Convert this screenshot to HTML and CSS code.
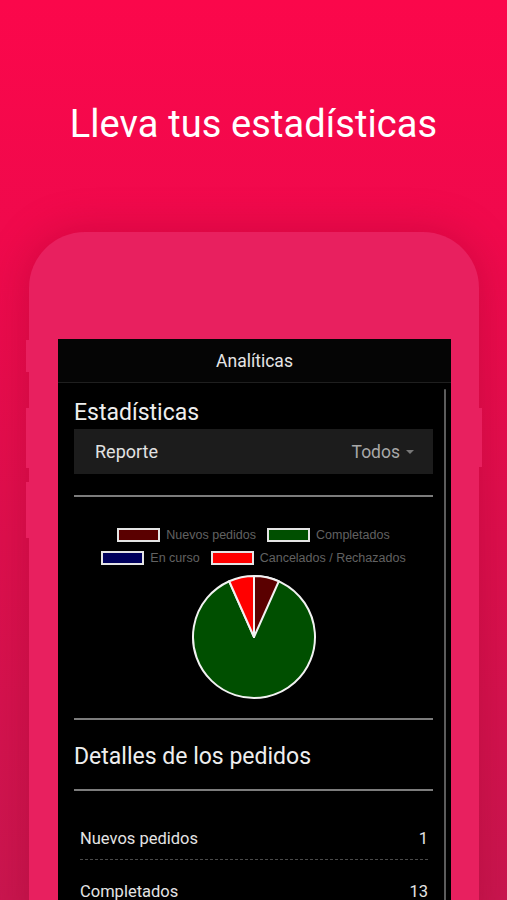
FILE: index.html
```html
<!DOCTYPE html>
<html lang="es">
<head>
<meta charset="utf-8">
<title>Lleva tus estadísticas</title>
<link rel="stylesheet" href="styles.css">
</head>
<body>
<div class="page">
  <h1 class="headline">Lleva tus estadísticas</h1>
  <div class="phone">
    <span class="btn btn-l1"></span>
    <span class="btn btn-l2"></span>
    <span class="btn btn-l3"></span>
    <span class="btn btn-r1"></span>
    <div class="screen">
      <div class="appbar">Analíticas</div>
      <div class="content">
        <span class="scrollbar"></span>
        <h2 class="section-title">Estadísticas</h2>
        <div class="select">
          <span class="select-label">Reporte</span>
          <span class="select-value">Todos <span class="caret"></span></span>
        </div>
        <hr class="rule rule-first">
        <div class="legend">
          <div class="legend-row">
            <span class="legend-item"><span class="swatch sw-new"></span>Nuevos pedidos</span>
            <span class="legend-item"><span class="swatch sw-done"></span>Completados</span>
          </div>
          <div class="legend-row">
            <span class="legend-item"><span class="swatch sw-prog"></span>En curso</span>
            <span class="legend-item"><span class="swatch sw-canc"></span>Cancelados / Rechazados</span>
          </div>
        </div>
        <div class="chart">
          <svg width="128" height="128" viewBox="-64 -64 128 128">
            <path d="M0 0 L0 -61 A61 61 0 1 1 -24.81 -55.73 Z" fill="#004f00" stroke="#f2f2f2" stroke-width="2" stroke-linejoin="round"/>
            <path d="M0 0 L0 -61 A61 61 0 0 1 24.81 -55.73 Z" fill="#5a0000" stroke="#f2f2f2" stroke-width="2" stroke-linejoin="round"/>
            <path d="M0 0 L-24.81 -55.73 A61 61 0 0 1 0 -61 Z" fill="#ff0000" stroke="#f2f2f2" stroke-width="2" stroke-linejoin="round"/>
          </svg>
        </div>
        <hr class="rule rule-chart">
        <h2 class="section-title details-title">Detalles de los pedidos</h2>
        <hr class="rule rule-details">
        <ul class="stats">
          <li class="stat"><span>Nuevos pedidos</span><span>1</span></li>
          <li class="stat"><span>Completados</span><span>13</span></li>
        </ul>
      </div>
    </div>
  </div>
</div>
</body>
</html>
```

FILE: styles.css
```css
html, body {
  margin: 0;
  padding: 0;
}

body {
  width: 507px;
  height: 900px;
  overflow: hidden;
  font-family: Roboto, "Liberation Sans", sans-serif;
  background: linear-gradient(180deg, #fb074b 0%, #f0094c 25%, #dd0f4d 60%, #c9164f 100%);
}

.page {
  display: flex;
  flex-direction: column;
  height: 900px;
}

.headline {
  margin: 0;
  padding-top: 102px;
  height: 232px;
  flex: none;
  box-sizing: border-box;
  text-align: center;
  color: #ffffff;
  font-weight: 400;
  font-size: 38px;
  line-height: 44px;
  letter-spacing: 0.1px;
}

.phone {
  position: relative;
  margin-left: 29px;
  width: 450px;
  flex: 1;
  box-sizing: border-box;
  padding: 107px 28px 0 29px;
  background: #e8205f;
  border-radius: 56px 56px 0 0;
  box-shadow: 0 0 40px rgba(150, 0, 40, 0.35);
  display: flex;
}

.btn {
  position: absolute;
  width: 3px;
  background: #e8205f;
}
.btn-l1 { left: -3px; top: 108px; height: 32px; }
.btn-l2 { left: -3px; top: 176px; height: 60px; }
.btn-l3 { left: -3px; top: 250px; height: 56px; }
.btn-r1 { right: -3px; top: 176px; height: 59px; }

.screen {
  flex: 1;
  background: #000;
  display: flex;
  flex-direction: column;
}

.appbar {
  height: 44px;
  flex: none;
  box-sizing: border-box;
  border-bottom: 1px solid #1f1f1f;
  background: #050505;
  color: #e6e6e6;
  font-size: 17.5px;
  display: flex;
  align-items: center;
  justify-content: center;
}

.content {
  position: relative;
  padding: 0 18px 0 16px;
  flex: 1;
}

.scrollbar {
  position: absolute;
  right: 5px;
  top: 6px;
  bottom: 0;
  width: 2px;
  background: #5c5c5c;
  border-radius: 1px;
}

.section-title {
  margin: 17px 0 0;
  font-size: 23px;
  font-weight: 400;
  line-height: 26px;
  color: #eeeeee;
}

.select {
  margin-top: 3px;
  height: 45px;
  background: #1c1c1c;
  display: flex;
  align-items: center;
  justify-content: space-between;
  padding: 0 19px 0 21px;
}

.select-label {
  color: #e2e2e2;
  font-size: 18px;
}

.select-value {
  color: #a8a8a8;
  font-size: 17.5px;
  display: flex;
  align-items: center;
  gap: 6px;
}

.caret {
  width: 0;
  height: 0;
  border-left: 4px solid transparent;
  border-right: 4px solid transparent;
  border-top: 4px solid #777;
  margin-top: 1px;
}

.rule {
  margin: 0;
  border: 0;
  height: 2px;
  background: #7c7c7c;
}

.rule-first {
  margin-top: 21px;
}

.legend {
  margin-top: 31px;
  display: flex;
  flex-direction: column;
  gap: 9px;
  font-family: "Liberation Sans", Arial, sans-serif;
  font-size: 12.5px;
  color: #626262;
}

.legend-row {
  display: flex;
  justify-content: center;
  gap: 11px;
  height: 14px;
  align-items: center;
}

.legend-item {
  display: flex;
  align-items: center;
  gap: 6px;
  white-space: nowrap;
}

.swatch {
  width: 39px;
  height: 10px;
  border: 2px solid #e4e4e4;
}
.sw-new { background: #5a0000; }
.sw-done { background: #004f00; }
.sw-prog { background: #00005c; }
.sw-canc { background: #ff0000; }

.chart {
  margin-top: 8px;
  display: flex;
  justify-content: center;
}

.chart svg {
  display: block;
}

.rule-chart {
  margin-top: 17px;
}

.details-title {
  margin-top: 24px;
}

.rule-details {
  margin-top: 19px;
}

.stats {
  list-style: none;
  margin: 33px 0 0;
  padding: 0 5px 0 6px;
}

.stat {
  display: flex;
  justify-content: space-between;
  font-size: 16.5px;
  color: #e4e4e4;
  height: 35px;
  line-height: 30px;
  border-bottom: 1px dashed #4a4a4a;
  margin-bottom: 17px;
}
```
